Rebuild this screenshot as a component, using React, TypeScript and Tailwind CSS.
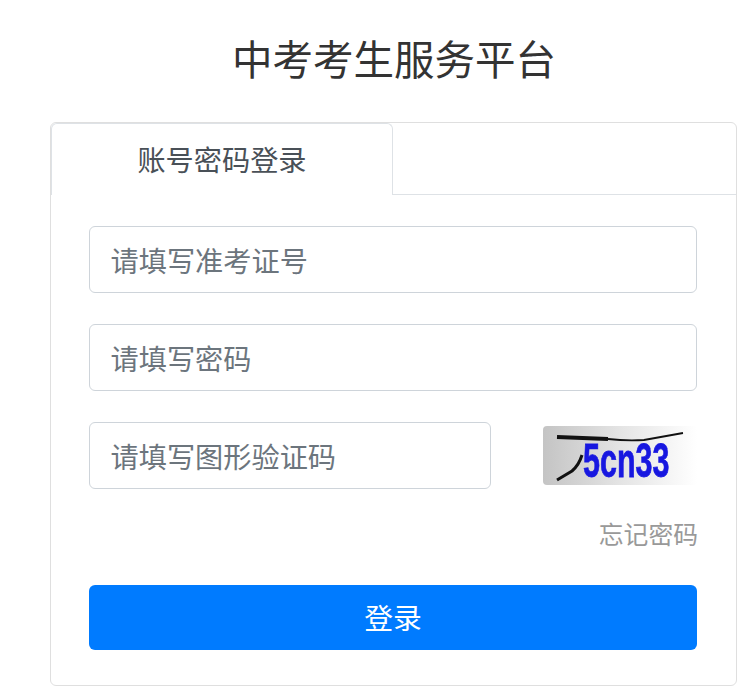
const FONT = "font-['Liberation_Sans','Noto_Sans_CJK_SC',sans-serif]";

const inputCls =
  "block h-[67px] rounded-[6px] border border-[#ced4da] bg-white pt-[6px] pl-[20.5px] pr-[21px] text-[28.2px] text-[#495057] outline-none placeholder:text-[#6c757d]";

// captcha picture, drawn because there is no image file
const Captcha = () => (
  <div className="relative mr-px h-[59px] w-[154px] shrink-0 overflow-hidden rounded-[4px] bg-gradient-to-r from-[#c4c4c4] via-[#e4e4e4] to-white">
    <span className="absolute top-[19px] left-[40px] origin-center scale-y-[1.55] text-[30.5px] leading-[30px] font-bold whitespace-nowrap text-[#1717e0] blur-[0.4px] [-webkit-text-stroke:0.5px_#1717e0]">
      5cn33
    </span>
    <svg width="154" height="59" viewBox="0 0 154 59" className="absolute top-0 left-0 blur-[0.4px]">
      <path d="M14 11 L65 13" stroke="#111" strokeWidth="4" fill="none" />
      <path d="M65 13 Q83 15 101 14 L140 7" stroke="#111" strokeWidth="1.8" fill="none" />
      <path d="M14 54 L29 45 Q36 39 39 29" stroke="#111" strokeWidth="3" fill="none" />
    </svg>
  </div>
);

const App = () => {
  return (
    <div className={`${FONT} h-[693px] w-[751px] overflow-hidden bg-white`}>
      <h1 className="pt-[31px] pl-[37px] text-center text-[40.5px] leading-[60px] font-normal text-[#333333]">
        中考考生服务平台
      </h1>

      <div className="mt-[31px] ml-[50px] h-[564px] w-[687px] rounded-[6px] border border-[#dfdfdf]">
        {/* tabs */}
        <div className="flex h-[72px] border-b border-[#dee2e6]">
          <div className="-mb-px flex h-[72px] w-[342px] items-center justify-center rounded-t-[6px] border-t border-r border-l border-[#dee2e6] bg-white pt-[4px] text-[28.2px] text-[#495057]">
            账号密码登录
          </div>
        </div>

        {/* form */}
        <form className="px-[38px] pt-[31px]">
          <input className={`${inputCls} w-[608px]`} placeholder="请填写准考证号" />
          <input className={`${inputCls} mt-[31px] w-[608px]`} placeholder="请填写密码" />
          <div className="mt-[31px] flex items-center justify-between">
            <input className={`${inputCls} w-[402px]`} placeholder="请填写图形验证码" />
            <Captcha />
          </div>
          <div className="mt-[29px] text-right text-[24.8px] leading-[36px] text-[#999999]">忘记密码</div>
          <button
            type="button"
            className="mt-[31px] block h-[65px] w-[608px] rounded-[6px] bg-[#007bff] pt-[4px] text-[28.8px] text-white"
          >
            登录
          </button>
        </form>
      </div>
    </div>
  );
};

export default App;
